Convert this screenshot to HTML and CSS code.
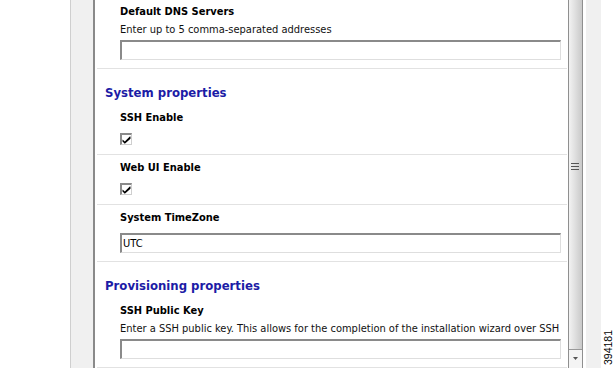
FILE: index.html
```html
<!DOCTYPE html>
<html>
<head>
<meta charset="utf-8">
<link rel="stylesheet" href="styles.css">
</head>
<body>
<div class="screen">
  <div class="outer"></div>
  <div class="gutter"></div>
  <div class="panel">
    <div class="row first">
      <div class="label">Default DNS Servers</div>
      <div class="desc">Enter up to 5 comma-separated addresses</div>
      <div class="input"></div>
    </div>
    <h2 class="section">System properties</h2>
    <div class="row">
      <div class="label">SSH Enable</div>
      <span class="check"><svg width="9" height="8" viewBox="0 0 9 8"><path d="M0.5 3.5 L2.8 5.6 L7.8 0.5 L8.5 0.5 L8.5 2.8 L2.8 7.8 L0.5 5.6 Z" fill="#000"/></svg></span>
    </div>
    <div class="row">
      <div class="label">Web UI Enable</div>
      <span class="check"><svg width="9" height="8" viewBox="0 0 9 8"><path d="M0.5 3.5 L2.8 5.6 L7.8 0.5 L8.5 0.5 L8.5 2.8 L2.8 7.8 L0.5 5.6 Z" fill="#000"/></svg></span>
    </div>
    <div class="row">
      <div class="label">System TimeZone</div>
      <div class="input">UTC</div>
    </div>
    <h2 class="section">Provisioning properties</h2>
    <div class="row">
      <div class="label">SSH Public Key</div>
      <div class="desc">Enter a SSH public key. This allows for the completion of the installation wizard over SSH</div>
      <div class="input"></div>
    </div>
  </div>
  <div class="scrollbar">
    <div class="thumb"><span class="grip"></span></div>
    <div class="arrow"><svg width="5" height="3" viewBox="0 0 5 3"><path d="M0 0 H5 L2.5 3 Z" fill="#555"/></svg></div>
  </div>
  <div class="gap"></div>
  <div class="sidebar"></div>
  <div class="figno"><span>394181</span></div>
</div>
</body>
</html>
```
FILE: styles.css
```css
html, body {
  margin: 0;
  padding: 0;
  background: #fff;
}
.screen {
  display: flex;
  width: 614px;
  height: 368px;
  overflow: hidden;
  font-family: "DejaVu Sans Condensed", "DejaVu Sans", sans-serif;
  color: #000;
}
.outer {
  width: 70px;
  flex: none;
  background: #fff;
}
.gutter {
  width: 22px;
  flex: none;
  background: #f0f0f0;
  border-left: 1px solid #cfcfcf;
  border-right: 2px solid #8a8a8a;
}
.panel {
  width: 472px;
  flex: none;
  background: #fff;
  display: flex;
  flex-direction: column;
}
.row {
  margin-left: 2px;
  padding: 6px 6px 8px 23px;
  border-bottom: 1px solid #e2e2e2;
  display: flex;
  flex-direction: column;
  align-items: flex-start;
}
.row.first {
  padding-top: 5px;
}
.label {
  font-weight: bold;
  font-size: 11px;
  line-height: 14px;
  color: #000;
}
.desc {
  font-size: 11px;
  line-height: 14px;
  margin-top: 4px;
  color: #111;
}
.input {
  align-self: stretch;
  height: 17px;
  margin-top: 3px;
  border-top: 2px solid #8a8a8a;
  border-left: 2px solid #8a8a8a;
  border-right: 1px solid #dedede;
  border-bottom: 1px solid #dedede;
  font-size: 11px;
  line-height: 17px;
  padding-left: 1px;
  color: #000;
}
.label + .input {
  margin-top: 8px;
}
.check {
  margin-top: 8px;
  margin-bottom: 1px;
  width: 9px;
  height: 9px;
  border-top: 2px solid #8a8a8a;
  border-left: 2px solid #8a8a8a;
  border-right: 1px solid #cfcfcf;
  border-bottom: 1px solid #cfcfcf;
  display: flex;
  align-items: center;
  justify-content: center;
  background: #fff;
}
.check svg { display: block; }
.section {
  margin: 0;
  padding: 16px 0 4px 10px;
  font-size: 13px;
  line-height: 16px;
  font-weight: bold;
  color: #1c1ca6;
}
.scrollbar {
  width: 13px;
  flex: none;
  margin-left: 1px;
  border-left: 1px solid #8f8f8f;
  border-right: 1px solid #8f8f8f;
  display: flex;
  flex-direction: column;
  background: #f4f4f4;
}
.thumb {
  height: 350px;
  background: linear-gradient(to right, #f2f2f2, #e2e2e2 40%, #c9c9c9);
  border-bottom: 1px solid #999;
  box-sizing: border-box;
  position: relative;
}
.grip {
  position: absolute;
  left: 2px;
  top: 163px;
  width: 8px;
  height: 9px;
  background: repeating-linear-gradient(to bottom, #555 0 1px, transparent 1px 3px);
}
.arrow {
  flex: 1;
  display: flex;
  align-items: center;
  justify-content: center;
  padding-bottom: 2px;
}
.gap {
  width: 3px;
  flex: none;
}
.sidebar {
  width: 15px;
  flex: none;
  background: #f0f0f0;
}
.figno {
  flex: 1;
  display: flex;
  align-items: flex-end;
  justify-content: center;
  padding-bottom: 3px;
}
.figno span {
  writing-mode: vertical-rl;
  transform: rotate(180deg);
  font-family: "Liberation Sans", Arial, sans-serif;
  font-size: 10.5px;
  line-height: 10px;
  color: #000;
}
```
